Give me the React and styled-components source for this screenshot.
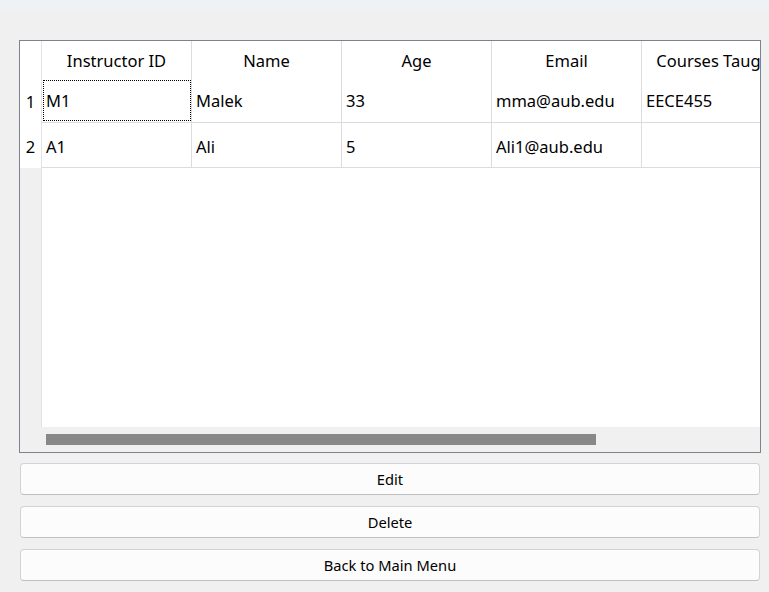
import React from 'react';
import styled, { createGlobalStyle } from 'styled-components';

const GlobalStyle = createGlobalStyle`
  body {
    margin: 0;
    background: #f0f0f0;
    font-family: "Noto Sans", "Open Sans", sans-serif;
    color: #000;
  }
`;

const columns = ['Instructor ID', 'Name', 'Age', 'Email', 'Courses Taught'];

const rows = [
  ['M1', 'Malek', '33', 'mma@aub.edu', 'EECE455'],
  ['A1', 'Ali', '5', 'Ali1@aub.edu', ''],
];

const TitleStrip = styled.div`
  height: 10px;
  background: #eef2f5;
`;

const Window = styled.div`
  display: flex;
  flex-direction: column;
  gap: 10px;
  padding: 30px 0 0 19px;
  width: 742px;
`;

const Frame = styled.div`
  border: 1px solid #7d828c;
  height: 411px;
  display: flex;
  flex-direction: column;
  background: #fff;
  overflow: hidden;
`;

const Viewport = styled.div`
  flex: 1;
  display: flex;
  overflow: hidden;
`;

const RowHeaderCol = styled.div`
  width: 21px;
  flex-shrink: 0;
  display: flex;
  flex-direction: column;
  background: #f0f0f0;
  border-right: 1px solid #e3e3e3;
`;

const Corner = styled.div`
  height: 38px;
  background: #fff;
`;

const RowNum = styled.div`
  height: ${p => p.h}px;
  box-sizing: border-box;
  padding-top: ${p => p.shift}px;
  background: #fff;
  display: flex;
  align-items: center;
  justify-content: center;
  font-size: 16.5px;
`;

const Grid = styled.div`
  display: flex;
  flex-direction: column;
  width: 760px;
  flex-shrink: 0;
`;

const Row = styled.div`
  display: flex;
  height: ${p => p.h}px;
  box-sizing: border-box;
  border-bottom: ${p => (p.header ? 'none' : '1px solid #dcdcdc')};
`;

const HeadCell = styled.div`
  width: 150px;
  box-sizing: border-box;
  flex-shrink: 0;
  border-right: 1px solid #dcdcdc;
  display: flex;
  align-items: center;
  justify-content: center;
  font-size: 16.5px;
  white-space: nowrap;
`;

const Cell = styled.div`
  width: 150px;
  box-sizing: border-box;
  flex-shrink: 0;
  border-right: 1px solid #dcdcdc;
  display: flex;
  align-items: center;
  padding-left: 4px;
  padding-top: ${p => p.shift || 0}px;
  font-size: 16.5px;
  white-space: nowrap;
  outline: ${p => (p.focused ? '1px dotted #000' : 'none')};
  outline-offset: -2px;
`;

const ScrollTrack = styled.div`
  height: 25px;
  background: #f0f0f0;
  display: flex;
  align-items: center;
  padding-left: 26px;
`;

const ScrollThumb = styled.div`
  width: 550px;
  height: 11px;
  background: #888888;
`;

const Buttons = styled.div`
  display: flex;
  flex-direction: column;
  gap: 11px;
  padding: 0 1px;
`;

const Button = styled.button`
  height: 32px;
  border: 1px solid #d3d3d3;
  border-bottom-color: #c0c0c0;
  border-radius: 4px;
  background: #fcfcfc;
  font-family: "Noto Sans", "Open Sans", sans-serif;
  font-size: 14.7px;
  color: #000;
  padding: 0;
`;

export default function App() {
  const heights = [44, 45];
  const shifts = [0, 2];
  return (
    <>
      <GlobalStyle />
      <TitleStrip />
      <Window>
        <Frame>
          <Viewport>
            <RowHeaderCol>
              <Corner />
              {rows.map((r, i) => (
                <RowNum key={i} h={heights[i]} shift={shifts[i]}>{i + 1}</RowNum>
              ))}
            </RowHeaderCol>
            <Grid>
              <Row header h={38}>
                {columns.map(c => (
                  <HeadCell key={c}>{c}</HeadCell>
                ))}
              </Row>
              {rows.map((r, i) => (
                <Row key={i} h={heights[i]}>
                  {r.map((v, j) => (
                    <Cell key={j} shift={shifts[i]} focused={i === 0 && j === 0}>{v}</Cell>
                  ))}
                </Row>
              ))}
            </Grid>
          </Viewport>
          <ScrollTrack>
            <ScrollThumb />
          </ScrollTrack>
        </Frame>
        <Buttons>
          <Button>Edit</Button>
          <Button>Delete</Button>
          <Button>Back to Main Menu</Button>
        </Buttons>
      </Window>
    </>
  );
}
